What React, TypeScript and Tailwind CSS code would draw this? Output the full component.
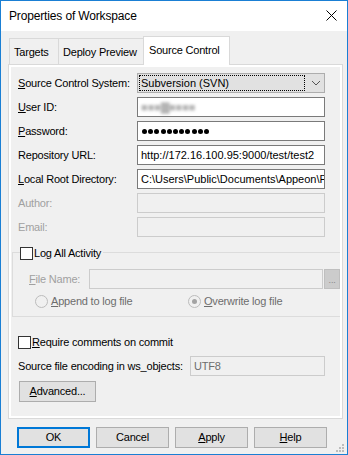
import React from "react";

type RowProps = {
  label: React.ReactNode;
  disabled?: boolean;
  children?: React.ReactNode;
};

function FieldRow({ label, disabled, children }: RowProps) {
  return (
    <div className="flex h-[20px] items-center">
      <div
        className={`w-[119px] pl-[7px] box-content ${
          disabled ? "text-[#a0a0a0]" : "text-black"
        }`}
      >
        {label}
      </div>
      <div
        className={`flex h-[20px] w-[188px] items-center overflow-hidden whitespace-nowrap border pl-[3px] tracking-normal ${
          disabled ? "border-[#cccccc] bg-[#f0f0f0]" : "border-[#7a7a7a] bg-white"
        }`}
      >
        {children}
      </div>
    </div>
  );
}

function CheckBox() {
  return <div className="h-[13px] w-[13px] shrink-0 border border-[#333333] bg-white" />;
}

function Radio({ checked }: { checked?: boolean }) {
  return (
    <div className="flex h-[13px] w-[13px] shrink-0 items-center justify-center rounded-full border border-[#bcbcbc] bg-[#f0f0f0]">
      {checked && <div className="h-[5px] w-[5px] rounded-full bg-[#a3a3a3]" />}
    </div>
  );
}

function Button({
  children,
  primary,
  width = "w-[73px]"
}: {
  children: React.ReactNode;
  primary?: boolean;
  width?: string;
}) {
  return (
    <div
      className={`flex h-[21px] ${width} items-center justify-center bg-[#e1e1e1] ${
        primary ? "border-2 border-[#0078d7]" : "border border-[#adadad]"
      }`}
    >
      {children}
    </div>
  );
}

export default function App() {
  return (
    <div className="relative flex h-[455px] w-[348px] flex-col border border-[#1a7fd4] bg-[#f0f0f0] font-['Liberation_Sans',Arial,sans-serif] text-[11px] tracking-[-0.2px] text-black">
      {/* title bar */}
      <div className="flex h-[30px] shrink-0 items-center justify-between bg-white pl-[8px] pr-[10px]">
        <span className="text-[12px] tracking-[-0.15px]">Properties of Workspace</span>
        <svg width="11" height="11" viewBox="0 0 11 11" className="mb-[1px]">
          <path d="M0.5 0.5 L10.5 10.5 M10.5 0.5 L0.5 10.5" stroke="#000" strokeWidth="1" />
        </svg>
      </div>

      {/* tabs */}
      <div className="ml-[8px] mt-[5px] flex h-[28px] items-end">
        <div className="flex h-[26px] w-[50px] items-center border-l border-r border-t border-[#d9d9d9] pl-[4px] pt-[1px]">
          Targets
        </div>
        <div className="flex h-[26px] w-[84px] items-center border-t border-[#d9d9d9] pl-[4px] pt-[1px]">
          Deploy Preview
        </div>
        <div className="relative z-10 -mb-px flex h-[29px] w-[87px] items-center border-l border-r border-t border-[#d9d9d9] bg-white pb-[1px] pl-[5px]">
          Source Control
        </div>
      </div>

      {/* panel */}
      <div className="ml-[7px] h-[355px] w-[335px] border border-[#d9d9d9]">
        <div className="flex h-full flex-col border-2 border-white">
          <div className="mt-[6px] flex flex-col gap-[4px]">
            <div className="flex h-[20px] items-center">
              <div className="w-[119px] pl-[7px] box-content">
                <u>S</u>ource Control System:
              </div>
              <div className="flex h-[20px] w-[188px] items-center border border-[#adadad] bg-[#e1e1e1] p-[1px]">
                <div className="flex h-[16px] w-[166px] items-center border border-dotted border-black pl-[1px] tracking-normal">
                  Subversion (SVN)
                </div>
                <svg width="10" height="6" viewBox="0 0 10 6" className="ml-[6px]">
                  <path d="M1 1 L5 5 L9 1" fill="none" stroke="#555" strokeWidth="1" />
                </svg>
              </div>
            </div>
            <FieldRow label={<><u>U</u>ser ID:</>}>
              <span className="blur-[1.5px] text-[#b4b4b4]">■■■▇■■■■</span>
            </FieldRow>
            <FieldRow label={<><u>P</u>assword:</>}>
              <div className="flex gap-[1.2px] pl-[1px]">
                {Array.from({ length: 11 }).map((_, i) => (
                  <div key={i} className="h-[5px] w-[5px] rounded-full bg-black" />
                ))}
              </div>
            </FieldRow>
            <FieldRow label="Repository URL:">http://172.16.100.95:9000/test/test2</FieldRow>
            <FieldRow label={<><u>L</u>ocal Root Directory:</>}>
              C:\Users\Public\Documents\Appeon\P
            </FieldRow>
            <FieldRow label="Author:" disabled />
            <FieldRow label="Email:" disabled />
          </div>

          {/* log group */}
          <div className="ml-[1px] mt-[15px] flex flex-col border border-r-0 border-[#dcdcdc] pb-[8px]">
            <div className="-mt-[6px] ml-[7px] flex h-[13px] w-fit items-center gap-[1px] bg-[#f0f0f0] pr-[2px]">
              <CheckBox />
              <span>
                Lo<u>g</u> All Activity
              </span>
            </div>
            <div className="mt-[9px] flex h-[20px] items-center">
              <div className="w-[60px] pl-[16px] box-content text-[#a0a0a0]">
                <u>F</u>ile Name:
              </div>
              <div className="h-[20px] w-[236px] border border-[#cccccc] bg-[#f0f0f0]" />
              <div className="ml-[1px] flex h-[20px] w-[16px] items-end justify-center border border-[#bfbfbf] bg-[#cccccc] pb-[3px] text-[9px] leading-none text-[#888]">
                ...
              </div>
            </div>
            <div className="mt-[5px] flex h-[14px] items-center text-[#6d6d6d]">
              <div className="ml-[22px] flex w-[153px] items-center gap-[3px]">
                <Radio />
                <span>
                  <u>A</u>ppend to log file
                </span>
              </div>
              <div className="flex items-center gap-[3px]">
                <Radio checked />
                <span>
                  <u>O</u>verwrite log file
                </span>
              </div>
            </div>
          </div>

          <div className="ml-[7px] mt-[19px] flex h-[13px] items-center gap-[1px]">
            <CheckBox />
            <span>
              <u>R</u>equire comments on commit
            </span>
          </div>

          <div className="mt-[7px] flex h-[20px] items-center">
            <div className="w-[172px] pl-[7px] box-content">Source file encoding in ws_objects:</div>
            <div className="flex h-[20px] w-[135px] items-center border border-[#cccccc] bg-[#f0f0f0] pl-[3px] text-[#6d6d6d]">
              UTF8
            </div>
          </div>

          <div className="ml-[8px] mt-[5px]">
            <Button width="w-[77px]">
              <span>
                <u>A</u>dvanced...
              </span>
            </Button>
          </div>
        </div>
      </div>

      {/* dialog buttons */}
      <div className="ml-[16px] mt-[8px] flex gap-[6px]">
        <Button primary>OK</Button>
        <Button>Cancel</Button>
        <Button>
          <span>
            <u>A</u>pply
          </span>
        </Button>
        <Button>
          <span>
            <u>H</u>elp
          </span>
        </Button>
      </div>

      {/* size grip */}
      <svg width="8" height="8" viewBox="0 0 8 8" className="absolute bottom-[2px] right-[3px]">
        <rect x="6" y="0" width="2" height="2" fill="#bcbcbc" />
        <rect x="3" y="3" width="2" height="2" fill="#bcbcbc" />
        <rect x="6" y="3" width="2" height="2" fill="#bcbcbc" />
        <rect x="0" y="6" width="2" height="2" fill="#bcbcbc" />
        <rect x="3" y="6" width="2" height="2" fill="#bcbcbc" />
        <rect x="6" y="6" width="2" height="2" fill="#bcbcbc" />
      </svg>
    </div>
  );
}
